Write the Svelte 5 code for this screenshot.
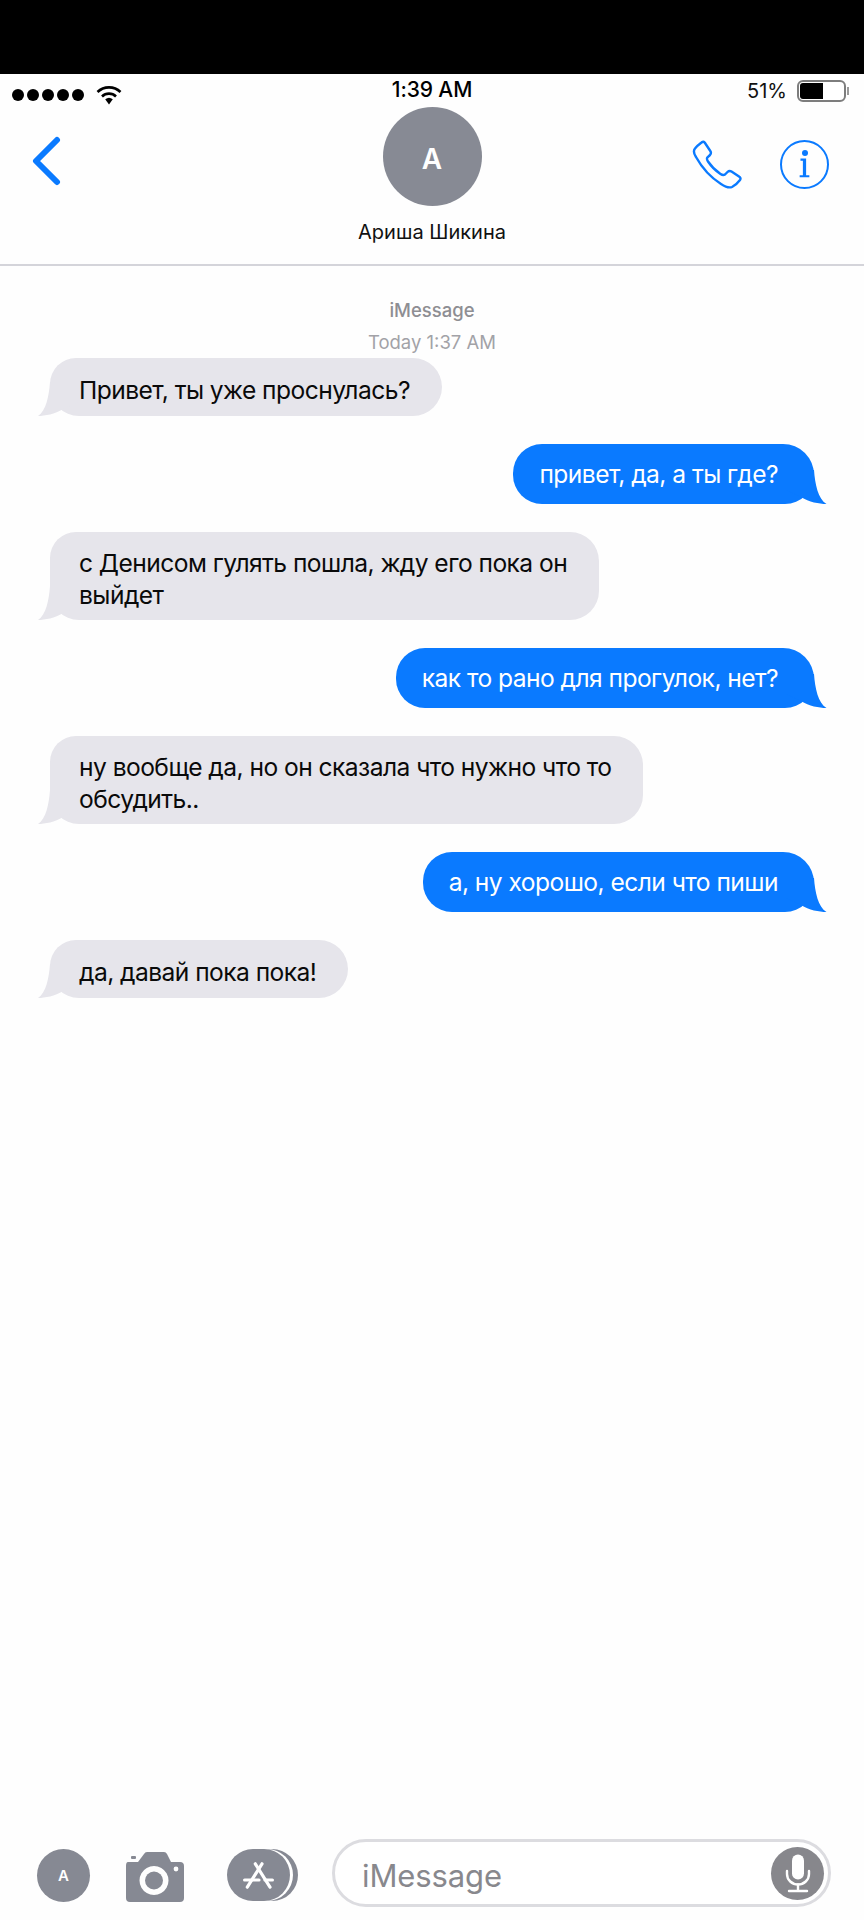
<script>
  const messages = [
    { me: false, lines: ['Привет, ты уже проснулась?'] },
    { me: true, lines: ['привет, да, а ты где?'] },
    { me: false, lines: ['с Денисом гулять пошла, жду его пока он', 'выйдет'] },
    { me: true, lines: ['как то рано для прогулок, нет?'] },
    { me: false, lines: ['ну вообще да, но он сказала что нужно что то', 'обсудить..'] },
    { me: true, lines: ['а, ну хорошо, если что пиши'] },
    { me: false, lines: ['да, давай пока пока!'] }
  ];
</script>

<div class="phone">
  <div class="topbar"></div>
  <div class="status">
    <div class="signal">
      <div class="dots">
        {#each [1, 2, 3, 4, 5] as d (d)}<span class="dot"></span>{/each}
      </div>
      <svg class="wifi" width="26" height="20" viewBox="0 0 26 20" fill="none">
        <path d="M1.5 7 A16.5 16.5 0 0 1 24.5 7" stroke="#000" stroke-width="2.6" />
        <path d="M6 11.5 A10 10 0 0 1 20 11.5" stroke="#000" stroke-width="2.6" />
        <path d="M9.2 14.3 A6 6 0 0 1 16.8 14.3 L13 19.5 Z" fill="#000" />
      </svg>
    </div>
    <div class="time">1:39 AM</div>
    <div class="power">
      <span class="pct">51%</span>
      <div class="battery"><div class="charge"></div></div>
      <div class="nub"></div>
    </div>
  </div>

  <header class="head">
    <svg class="back" width="32" height="50" viewBox="0 0 32 50" fill="none">
      <path d="M27 4 L6 25 L27 46" stroke="#0a7aff" stroke-width="6" stroke-linecap="round" stroke-linejoin="round" />
    </svg>
    <div class="contact">
      <div class="avatar"><span class="initial">A</span></div>
      <div class="name">Ариша Шикина</div>
    </div>
    <div class="actions">
      <svg class="phone-ic" width="52" height="50" viewBox="0 0 52 50" fill="none">
        <path d="M4 8.5 C2 11 3 14 5 17 C10 26 19 37 30 44 C34.5 47 38.5 48 41 47 C43 46 47.5 42 49 40 C50 38.5 49.5 37.5 48 36.5 L40.5 31.5 C39 30.5 38 30.5 36.5 32 L34 34.5 C32.5 35.5 31 35 29.5 34 C25 31 20 26 17 21.5 C16 20 15.5 18.5 16.5 17.3 L19 15 C20.3 13.5 20.3 12.5 19.3 11 L14 3 C13 1.5 12 1.3 10.5 2.5 C8.5 4 5.5 6.5 4 8.5 Z" stroke="#0a7aff" stroke-width="2.4" stroke-linejoin="round" />
      </svg>
      <div class="info">
        <span class="i-dot"></span>
        <svg width="14" height="26" viewBox="0 0 14 26" class="i-stem">
          <path d="M2 2 H9 V22.5 H13 V25 H1 V22.5 H5 V4.5 H2 Z" fill="#0a7aff" />
        </svg>
      </div>
    </div>
  </header>

  <main class="thread">
    <div class="service">iMessage</div>
    <div class="stamp">Today 1:37 AM</div>
    <div class="list">
      {#each messages as m, i (i)}
        <div class="bubble" class:me={m.me}>
          <svg class="tail" width="42" height="34" viewBox="0 0 42 34">
            {#if m.me}
              <path d="M28 0 C29 14 32 29 40.5 34 C33 34 23 32 15 27 L0 20 L0 0 Z" fill="currentColor" />
            {:else}
              <path d="M12 0 C11 14 8 29 0 34 C7 34 17 32 25 27 L40 20 L40 0 Z" fill="currentColor" />
            {/if}
          </svg>
          {#each m.lines as l (l)}<div class="line">{l}</div>{/each}
        </div>
      {/each}
    </div>
  </main>

  <footer class="compose">
    <div class="kbd">A</div>
    <svg class="camera" width="60" height="52" viewBox="0 0 60 52">
      <path fill-rule="evenodd" fill="#868993" d="M3 11 H13 L19 3 Q20 1 22 1 H39 Q41 1 42 3 L46 11 H55 Q59 11 59 15 V47 Q59 51 55 51 H5 Q1 51 1 47 V15 Q1 11 3 11 Z M29 15 A14.5 14.5 0 1 0 29.01 15 Z" />
      <circle cx="29" cy="29.5" r="9" fill="#868993" />
      <circle cx="51" cy="18" r="2.4" fill="#fff" />
      <rect x="6" y="5" width="5" height="3" rx="1" fill="#868993" />
    </svg>
    <div class="store">
      <span class="store-back"></span>
      <span class="store-mid"></span>
      <span class="store-front">
        <svg width="31" height="27" viewBox="0 0 31 27" fill="none" stroke="#fff" stroke-width="3.2" stroke-linecap="round">
          <path d="M12.3 1.8 L27 25.2" />
          <path d="M19 1.8 L4.3 25.2" />
          <path d="M1.6 18 H16" />
          <path d="M22 18 H29.4" />
        </svg>
      </span>
    </div>
    <div class="field">
      <span class="placeholder">iMessage</span>
      <div class="mic">
        <svg width="30" height="40" viewBox="0 0 30 40" fill="none">
          <rect x="9" y="1.5" width="12" height="25" rx="6" fill="#fff" />
          <path d="M4 18 V21 C4 27 9 31.5 15 31.5 C21 31.5 26 27 26 21 V18" stroke="#fff" stroke-width="2.4" stroke-linecap="round" />
          <path d="M15 31.5 V37 M6 38 H24" stroke="#fff" stroke-width="2.4" stroke-linecap="round" />
        </svg>
      </div>
    </div>
  </footer>
</div>

<style>
  :global(body) {
    margin: 0;
    background: #fff;
  }
  .phone {
    width: 864px;
    height: 1920px;
    display: flex;
    flex-direction: column;
    background: #fefefe;
    font-family: Inter, "Liberation Sans", sans-serif;
    color: #000;
    overflow: hidden;
  }
  .topbar {
    height: 74px;
    background: #000;
    flex: none;
  }
  .status {
    height: 32px;
    flex: none;
    display: grid;
    grid-template-columns: 1fr auto 1fr;
    align-items: center;
    padding: 0 15px;
  }
  .signal {
    display: flex;
    align-items: center;
    gap: 12px;
    padding-top: 9px;
    margin-left: -3px;
  }
  .dots {
    display: flex;
    gap: 3px;
  }
  .dot {
    width: 12px;
    height: 12px;
    border-radius: 50%;
    background: #000;
  }
  .time {
    font-size: 21px;
    font-weight: 500;
    line-height: 32px;
    letter-spacing: -0.1px;
  }
  .power {
    display: flex;
    align-items: center;
    justify-content: flex-end;
    padding-top: 2px;
  }
  .pct {
    font-size: 20px;
    margin-right: 10px;
    color: #111;
  }
  .battery {
    width: 49px;
    height: 22px;
    box-sizing: border-box;
    border: 2px solid #7d7d7d;
    border-radius: 6px;
    padding: 1px;
    background: #fff;
  }
  .charge {
    width: 23px;
    height: 100%;
    background: #000;
    border-radius: 3px 0 0 3px;
  }
  .nub {
    width: 2px;
    height: 8px;
    background: #9a9a9a;
    margin-left: 1px;
  }
  .head {
    height: 160px;
    flex: none;
    box-sizing: border-box;
    border-bottom: 2px solid #d4d4da;
    display: grid;
    grid-template-columns: 1fr auto 1fr;
    align-items: start;
  }
  .back {
    margin: 30px 0 0 30px;
  }
  .contact {
    display: flex;
    flex-direction: column;
    align-items: center;
    padding-top: 1px;
  }
  .avatar {
    width: 99px;
    height: 99px;
    border-radius: 50%;
    background: #878a94;
    color: #fff;
    font-size: 28px;
    font-weight: 600;
    display: flex;
    align-items: center;
    justify-content: center;
  }
  .initial {
    padding-top: 4px;
  }
  .name {
    font-size: 20px;
    line-height: 26px;
    margin-top: 13px;
    color: #111;
  }
  .actions {
    display: flex;
    justify-content: flex-end;
    align-items: flex-start;
    gap: 37px;
    padding: 34px 35px 0 0;
  }
  .info {
    width: 49px;
    height: 49px;
    box-sizing: border-box;
    border: 2.4px solid #0a7aff;
    border-radius: 50%;
    position: relative;
  }
  .i-dot {
    position: absolute;
    left: 19.5px;
    top: 8px;
    width: 6px;
    height: 6px;
    border-radius: 50%;
    background: #0a7aff;
  }
  .i-stem {
    position: absolute;
    left: 16px;
    top: 15px;
    width: 13px;
    height: 21px;
  }
  .thread {
    flex: 1;
    min-height: 0;
  }
  .service {
    margin-top: 32px;
    text-align: center;
    font-size: 18.5px;
    font-weight: 500;
    line-height: 24px;
    color: #8e8e93;
  }
  .stamp {
    margin-top: 8px;
    text-align: center;
    font-size: 18.5px;
    line-height: 24px;
    color: #a2a2a7;
  }
  .list {
    margin-top: 4px;
    display: flex;
    flex-direction: column;
    align-items: flex-start;
    gap: 28px;
    padding: 0 50px;
  }
  .bubble {
    position: relative;
    box-sizing: border-box;
    min-height: 58px;
    display: flex;
    flex-direction: column;
    justify-content: center;
    background: #e6e5eb;
    color: #0a0a0a;
    font-size: 24.6px;
    letter-spacing: -0.55px;
    line-height: 32px;
    padding: 15px 32px 9px 29px;
    border-radius: 26px 29px 29px 29px;
  }
  .bubble.me {
    align-self: flex-end;
    min-height: 60px;
    background: #0a7aff;
    color: #fff;
    padding: 12px 36px 12px 26px;
    border-radius: 30px 32px 30px 30px;
  }
  .line {
    position: relative;
  }
  .tail {
    position: absolute;
    bottom: 0;
    left: -12px;
    color: #e6e5eb;
  }
  .me .tail {
    left: auto;
    right: -14px;
    color: #0a7aff;
  }
  .compose {
    height: 68px;
    flex: none;
    padding: 0 34px 13px 37px;
    display: flex;
    align-items: flex-start;
  }
  .kbd {
    width: 53px;
    height: 53px;
    margin-top: 10px;
    border-radius: 50%;
    background: #868993;
    color: #fff;
    font-size: 15px;
    font-weight: 600;
    display: flex;
    align-items: center;
    justify-content: center;
    flex: none;
  }
  .camera {
    margin: 12px 0 0 35px;
    flex: none;
  }
  .store {
    position: relative;
    width: 71px;
    height: 53px;
    margin: 10px 0 0 42px;
    flex: none;
  }
  .store-back,
  .store-mid,
  .store-front {
    position: absolute;
    top: 0;
    height: 52px;
    border-radius: 26px;
  }
  .store-back {
    left: 16px;
    width: 55px;
    background: #868993;
  }
  .store-mid {
    left: 10px;
    width: 56px;
    background: #fff;
  }
  .store-front {
    left: 0;
    width: 63px;
    background: #868993;
    display: flex;
    align-items: center;
    justify-content: center;
  }
  .field {
    width: 499px;
    height: 68px;
    margin: 0 0 0 34px;
    box-sizing: border-box;
    border: 3px solid #dcdce0;
    border-radius: 34px;
    display: flex;
    align-items: center;
    justify-content: space-between;
    padding: 0 4px 0 27px;
    background: #fff;
    flex: none;
  }
  .placeholder {
    font-size: 31px;
    letter-spacing: -0.1px;
    color: #88888d;
    padding-top: 4px;
  }
  .mic {
    width: 53px;
    height: 53px;
    border-radius: 50%;
    background: #87878c;
    display: flex;
    align-items: center;
    justify-content: center;
  }
</style>
